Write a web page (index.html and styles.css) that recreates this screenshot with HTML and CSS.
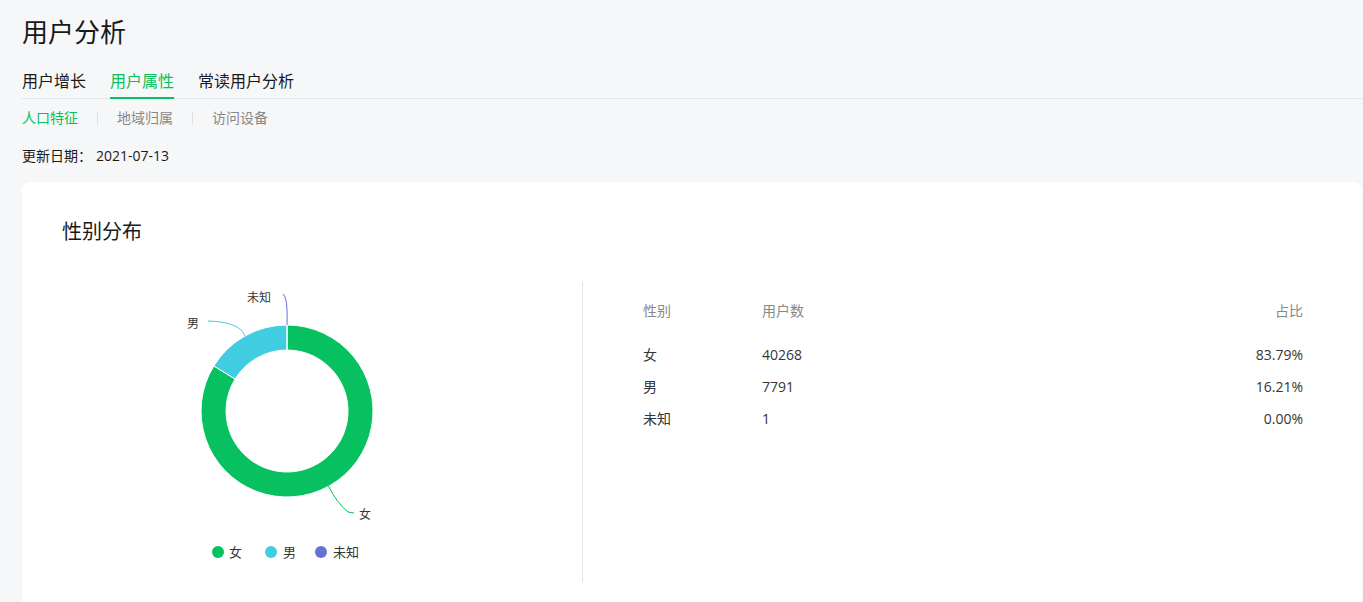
FILE: index.html
```html
<!DOCTYPE html>
<html lang="zh-CN">

<head>
    <meta charset="UTF-8">
    <meta name="viewport" content="width=device-width, initial-scale=1.0">
    <title>用户分析</title>
    <link rel="stylesheet" href="styles.css">
</head>

<body>
    <div class="page-title">用户分析</div>
    <div class="tabs">
        <div class="tab">用户增长</div>
        <div class="tab active">用户属性</div>
        <div class="tab">常读用户分析</div>
    </div>
    <div class="sub-tabs">
        <div class="sub-tab active">人口特征</div>
        <div class="sub-sep"></div>
        <div class="sub-tab">地域归属</div>
        <div class="sub-sep"></div>
        <div class="sub-tab">访问设备</div>
    </div>
    <div class="update-date">更新日期：<span class="date-value">2021-07-13</span></div>

    <div class="card">
        <div class="card-title">性别分布</div>
        <div class="card-body">
            <div class="chart">
                <svg width="520" height="300" viewBox="0 0 520 300">
                    <!-- donut -->
                    <path d="M225,43 A86,86 0 1 1 151.8,83.9 L173.1,97.0 A61,61 0 1 0 225,68 Z" fill="#07c160" stroke="#fff" stroke-width="1"/>
                    <path d="M151.8,83.9 A86,86 0 0 1 225,43 L225,68 A61,61 0 0 0 173.1,97.0 Z" fill="#40cde2" stroke="#fff" stroke-width="1"/>
                    <path d="M224.6,43 L225.4,43 L225.4,68 L224.6,68 Z" fill="#fff"/>

                    <!-- label lines -->
                    <path d="M266,203 Q274,220 286,230 L292,231" fill="none" stroke="#07c160" stroke-width="1"/>
                    <path d="M183,54 Q178,40 146,39" fill="none" stroke="#40cde2" stroke-width="1"/>
                    <path d="M225,43 Q226,15 221,12" fill="none" stroke="#6572d2" stroke-width="1"/>

                    <text x="297" y="237" class="label">女</text>
                    <text x="137" y="46" class="label" text-anchor="end">男</text>
                    <text x="209" y="20" class="label" text-anchor="end">未知</text>

                    <!-- legend -->
                    <circle cx="156" cy="270" r="6" fill="#07c160"/>
                    <text x="167" y="275" class="legend">女</text>
                    <circle cx="209" cy="270" r="6" fill="#40cde2"/>
                    <text x="221" y="275" class="legend">男</text>
                    <circle cx="259" cy="270" r="6" fill="#6572d2"/>
                    <text x="271" y="275" class="legend">未知</text>
                </svg>
            </div>
            <div class="data-table">
                <div class="row head">
                    <div class="col-name">性别</div>
                    <div class="col-count">用户数</div>
                    <div class="col-ratio">占比</div>
                </div>
                <div class="row">
                    <div class="col-name">女</div>
                    <div class="col-count">40268</div>
                    <div class="col-ratio">83.79%</div>
                </div>
                <div class="row">
                    <div class="col-name">男</div>
                    <div class="col-count">7791</div>
                    <div class="col-ratio">16.21%</div>
                </div>
                <div class="row">
                    <div class="col-name">未知</div>
                    <div class="col-count">1</div>
                    <div class="col-ratio">0.00%</div>
                </div>
            </div>
        </div>
    </div>
</body>

</html>
```

FILE: styles.css
```css
body {
    font-family: "Open Sans", "Noto Sans CJK SC", sans-serif;
    background: #f6f7f9;
    color: #353535;
    margin: 0;
    padding: 14px 1px 0 22px;
    overflow: hidden;
}

.page-title {
    font-size: 26px;
    line-height: 36px;
    color: #191919;
}

.tabs {
    display: flex;
    gap: 24px;
    margin-top: 19px;
    border-bottom: 1px solid #e3e4e6;
}

.tab {
    font-size: 16px;
    line-height: 24px;
    padding-bottom: 4px;
    border-bottom: 2px solid transparent;
    margin-bottom: -1px;
    color: #191919;
}

.tab.active {
    color: #07c160;
    border-bottom-color: #07c160;
}

.sub-tabs {
    display: flex;
    align-items: center;
    gap: 19px;
    margin-top: 9px;
}

.sub-tab {
    font-size: 14px;
    line-height: 20px;
    color: #888;
}

.sub-tab.active {
    color: #07c160;
}

.sub-sep {
    width: 1px;
    height: 13px;
    background: #e0e0e0;
}

.update-date {
    font-size: 14px;
    line-height: 20px;
    margin-top: 18px;
    color: #191919;
}

.date-value {
    margin-left: 4px;
}

.card {
    margin-top: 16px;
    background: #fff;
    border-radius: 8px;
    padding: 36px 40px 40px 40px;
}

.card-title {
    font-size: 20px;
    line-height: 28px;
    color: #191919;
}

.card-body {
    display: flex;
    margin-top: 36px;
}

.chart svg {
    display: block;
}

.label {
    font-size: 12px;
    fill: #353535;
    font-family: "Noto Sans CJK SC", sans-serif;
}

.legend {
    font-size: 13px;
    fill: #353535;
    font-family: "Noto Sans CJK SC", sans-serif;
}

.data-table {
    flex: 1;
    border-left: 1px solid #e5e5e5;
    padding: 19px 19px 0 60px;
    display: flex;
    flex-direction: column;
    gap: 12px;
}

.row {
    display: flex;
    font-size: 14px;
    line-height: 20px;
    color: #353535;
}

.row.head {
    color: #888;
    margin-bottom: 12px;
}

.col-name {
    width: 119px;
}

.col-count {
    flex: 1;
}

.col-ratio {
    text-align: right;
}
```
